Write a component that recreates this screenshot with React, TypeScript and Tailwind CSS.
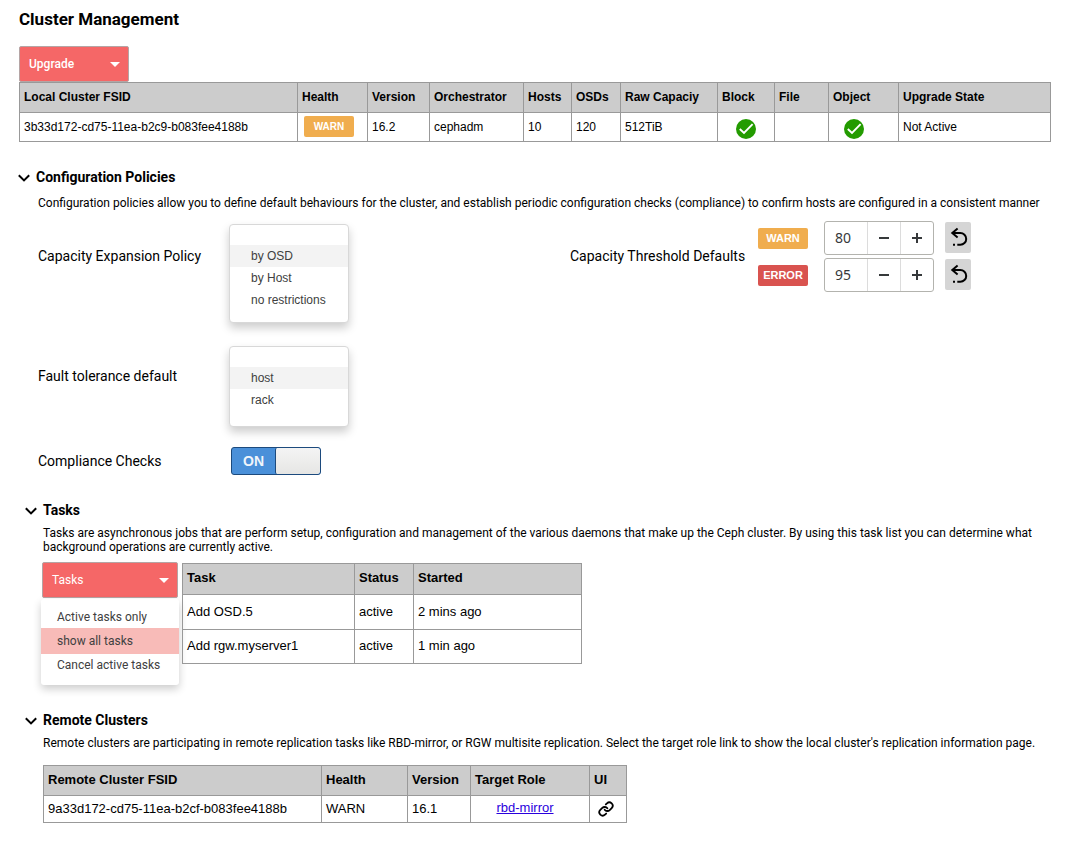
import { useState } from "react";
import type { ReactNode } from "react";

function Chevron() {
  return (
    <svg viewBox="0 0 12 10" className="h-[10px] w-3 shrink-0" fill="none" stroke="#000" strokeWidth="2" aria-hidden="true">
      <path d="M0.8 3.2 L6 8.4 L11.2 3.2" />
    </svg>
  );
}

function Caret() {
  return (
    <svg viewBox="0 0 10 5" className="h-[5px] w-[10px] shrink-0" fill="#fff" aria-hidden="true">
      <path d="M0 0 H10 L5 5 Z" />
    </svg>
  );
}

function CheckCircle() {
  return (
    <svg viewBox="0 0 20 20" className="h-5 w-5" role="img" aria-label="Enabled">
      <circle cx="10" cy="10" r="10" fill="#239b00" />
      <path d="M3.8 10 L8 14 L16.6 5.2" fill="none" stroke="#fff" strokeWidth="1.9" />
    </svg>
  );
}

function UndoIcon() {
  return (
    <svg viewBox="0 0 26 31" className="h-[31px] w-[26px]" fill="none" stroke="#000" strokeWidth="2" aria-hidden="true">
      <path d="M12.6 6.6 L7.3 11 L12.6 15.4" />
      <path d="M7.5 11 H15.3 A5.9 5.9 0 0 1 15.3 22.8 H12.3" />
      <path d="M8 22.8 H10" />
    </svg>
  );
}

function LinkIcon() {
  return (
    <svg viewBox="0 0 24 24" className="h-4 w-4" fill="none" stroke="#000" strokeWidth="2.7" strokeLinecap="round" strokeLinejoin="round" aria-hidden="true">
      <path d="M10 13a5 5 0 0 0 7.54.54l3-3a5 5 0 0 0-7.07-7.07l-1.72 1.71" />
      <path d="M14 11a5 5 0 0 0-7.54-.54l-3 3a5 5 0 0 0 7.07 7.07l1.71-1.71" />
    </svg>
  );
}

function Badge({ tone, size, children }: { tone: "warn" | "error"; size: string; children: ReactNode }) {
  const color = tone === "warn" ? "bg-[#f0ad4e]" : "bg-[#d9534f]";
  return (
    <span className={`${color} ${size} flex h-[21px] w-[50px] shrink-0 items-center justify-center rounded-[2px] font-['Liberation_Sans',sans-serif] font-bold text-white`}>
      {children}
    </span>
  );
}

function SectionHeading({ children }: { children: ReactNode }) {
  return (
    <h2 className="text-[14px] leading-5 font-bold">
      <button type="button" aria-expanded="true" className="flex items-center gap-[6px]">
        <Chevron />
        {children}
      </button>
    </h2>
  );
}

const th = "border border-[#999] px-1 pb-[2px] text-left align-middle font-bold";
const td = "border border-[#999] px-1 pb-px text-left align-middle";

function OptionList({ label, options, className }: { label: string; options: string[]; className: string }) {
  const [selected, setSelected] = useState(options[0]);
  return (
    <ul
      role="listbox"
      aria-label={label}
      className={`${className} w-[120px] rounded-[4px] border border-[#d8d8d8] bg-white pt-5 font-['Liberation_Sans',sans-serif] text-[12px] text-[#404040] shadow-[0_5px_10px_rgba(0,0,0,0.2)]`}
    >
      {options.map((option) => (
        <li key={option} role="option" aria-selected={option === selected}>
          <button
            type="button"
            onClick={() => setSelected(option)}
            className={`block h-[22px] w-full pl-[21px] text-left ${option === selected ? "bg-[#f3f3f3]" : ""}`}
          >
            {option}
          </button>
        </li>
      ))}
    </ul>
  );
}

function Stepper({ label, tone, initial }: { label: string; tone: "warn" | "error"; initial: number }) {
  const [value, setValue] = useState(initial);
  return (
    <div className="flex items-center">
      <Badge tone={tone} size="pt-px text-[11px]">{label}</Badge>
      <div className="ml-4 flex h-[34px] w-[110px] overflow-hidden rounded-[3px] border border-[#b3b3ae] bg-white text-[#36393b]">
        <input
          aria-label={`${label} threshold`}
          value={value}
          onChange={(e) => setValue(Number(e.target.value) || 0)}
          className="w-[42px] bg-transparent pb-[2px] pl-[10px] font-['Noto_Sans',sans-serif] text-[14px] outline-none"
        />
        <button type="button" aria-label={`Decrease ${label}`} onClick={() => setValue(value - 1)} className="flex flex-1 items-center justify-center border-l border-[#dcdcdc]">
          <svg viewBox="0 0 12 12" className="h-3 w-3" stroke="#36393b" strokeWidth="2"><path d="M1 6 H11" /></svg>
        </button>
        <button type="button" aria-label={`Increase ${label}`} onClick={() => setValue(value + 1)} className="flex flex-1 items-center justify-center border-l border-[#dcdcdc]">
          <svg viewBox="0 0 12 12" className="h-3 w-3" stroke="#36393b" strokeWidth="2"><path d="M1 6 H11 M6 1 V11" /></svg>
        </button>
      </div>
      <button type="button" aria-label={`Reset ${label}`} onClick={() => setValue(initial)} className="mt-px ml-[11px] self-start rounded-[2px] bg-[#d5d5d5]">
        <UndoIcon />
      </button>
    </div>
  );
}

function LocalClusterTable() {
  const columns = ["Local Cluster FSID", "Health", "Version", "Orchestrator", "Hosts", "OSDs", "Raw Capaciy", "Block", "File", "Object", "Upgrade State"];
  return (
    <table className="w-full table-fixed border-collapse font-['Liberation_Sans',sans-serif] text-[12px]">
      <colgroup>
        <col className="w-[278px]" />
        <col className="w-[70px]" />
        <col className="w-[62px]" />
        <col className="w-[94px]" />
        <col className="w-[48px]" />
        <col className="w-[49px]" />
        <col className="w-[97px]" />
        <col className="w-[57px]" />
        <col className="w-[54px]" />
        <col className="w-[70px]" />
        <col />
      </colgroup>
      <thead>
        <tr className="h-[30px] bg-[#ccc]">
          {columns.map((c) => (
            <th key={c} className={th}>{c}</th>
          ))}
        </tr>
      </thead>
      <tbody>
        <tr className="h-[29px]">
          <td className={td}>3b33d172-cd75-11ea-b2c9-b083fee4188b</td>
          <td className="border border-[#999] px-[6px] pb-px"><Badge tone="warn" size="text-[10px]">WARN</Badge></td>
          <td className={td}>16.2</td>
          <td className={td}>cephadm</td>
          <td className={td}>10</td>
          <td className={td}>120</td>
          <td className={td}>512TiB</td>
          <td className="border border-[#999] pt-1"><div className="flex justify-center"><CheckCircle /></div></td>
          <td className={td} />
          <td className="border border-[#999] pt-1 pr-5"><div className="flex justify-center"><CheckCircle /></div></td>
          <td className={td}>Not Active</td>
        </tr>
      </tbody>
    </table>
  );
}

function TasksTable() {
  const tasks = [
    ["Add OSD.5", "active", "2 mins ago"],
    ["Add rgw.myserver1", "active", "1 min ago"],
  ];
  return (
    <table className="mt-px w-[400px] table-fixed border-collapse font-['Liberation_Sans',sans-serif] text-[13px]">
      <colgroup>
        <col className="w-[172px]" />
        <col className="w-[59px]" />
        <col />
      </colgroup>
      <thead>
        <tr className="h-[31px] bg-[#ccc]">
          <th className={th}>Task</th>
          <th className={th}>Status</th>
          <th className={th}>Started</th>
        </tr>
      </thead>
      <tbody>
        {tasks.map((row) => (
          <tr key={row[0]} className="h-[34px] first:h-[35px]">
            {row.map((cell) => (
              <td key={cell} className={td}>{cell}</td>
            ))}
          </tr>
        ))}
      </tbody>
    </table>
  );
}

function RemoteTable() {
  return (
    <table className="w-[584px] table-fixed border-collapse font-['Liberation_Sans',sans-serif] text-[13px]">
      <colgroup>
        <col className="w-[278px]" />
        <col className="w-[86px]" />
        <col className="w-[63px]" />
        <col className="w-[119px]" />
        <col />
      </colgroup>
      <thead>
        <tr className="h-[30px] bg-[#ccc]">
          {["Remote Cluster FSID", "Health", "Version", "Target Role", "UI"].map((c) => (
            <th key={c} className={th}>{c}</th>
          ))}
        </tr>
      </thead>
      <tbody>
        <tr className="h-[27px]">
          <td className={td}>9a33d172-cd75-11ea-b2cf-b083fee4188b</td>
          <td className={td}>WARN</td>
          <td className={td}>16.1</td>
          <td className="border border-[#999] pr-[10px] pb-[2px] text-center">
            <a href="#rbd-mirror" className="text-[#2a00dd] underline">rbd-mirror</a>
          </td>
          <td className="border border-[#999] pb-px">
            <a href="#cluster-ui" aria-label="Open cluster UI" className="flex justify-center pr-1"><LinkIcon /></a>
          </td>
        </tr>
      </tbody>
    </table>
  );
}

const menuButton =
  "flex h-9 items-center justify-between rounded-[2px] border border-[#b5a5a5] bg-[#f56767] pr-2 pl-[9px] text-[12px] text-white";

export default function App() {
  const [compliance, setCompliance] = useState(true);
  const [filter, setFilter] = useState("show all tasks");

  return (
    <main className="min-h-screen bg-white pt-[7px] pr-[25px] pb-5 pl-[19px] font-[Roboto,sans-serif] text-black">
      <h1 className="text-[17px] leading-6 font-bold">Cluster Management</h1>

      <button type="button" className={`${menuButton} mt-[15px] w-[110px] font-medium`}>
        Upgrade
        <Caret />
      </button>
      <LocalClusterTable />

      <section className="mt-[25px]">
        <div className="-ml-px">
          <SectionHeading>Configuration Policies</SectionHeading>
        </div>
        <p className="mt-[9px] pl-[19px] text-[12px] leading-[14px]">
          Configuration policies allow you to define default behaviours for the cluster, and establish periodic configuration checks (compliance) to confirm hosts are configured in a consistent manner
        </p>

        <div className="mt-[11px] flex items-start pl-[19px] text-[14px]">
          <div className="grid w-[532px] grid-cols-[191px_1fr] items-start pt-[3px]">
            <span className="pt-[22px] leading-5">Capacity Expansion Policy</span>
            <OptionList label="Capacity Expansion Policy" options={["by OSD", "by Host", "no restrictions"]} className="pb-[11px]" />
            <span className="pt-[43px] leading-5">Fault tolerance default</span>
            <OptionList label="Fault tolerance default" options={["host", "rack"]} className="mt-[23px] pb-[15px]" />
            <label htmlFor="compliance" className="pt-6 leading-5">Compliance Checks</label>
            <button
              id="compliance"
              type="button"
              role="switch"
              aria-checked={compliance}
              onClick={() => setCompliance(!compliance)}
              className="mt-5 ml-[2px] flex h-7 w-[90px] overflow-hidden rounded-[3px] border border-[#1c4a7d] bg-[#4a90d9]"
            >
              <span className="flex h-full flex-1 items-center justify-center font-['Liberation_Sans',sans-serif] text-[14px] font-bold text-[#f0f5fb]">ON</span>
              <span className="h-full w-[45px] rounded-[2px] border-l border-[#1c4a7d] bg-linear-to-b from-[#f4f4f4] to-[#e6e6e4]" />
            </button>
          </div>
          <div className="flex items-center">
            <span className="w-[188px] pb-[2px] leading-5">Capacity Threshold Defaults</span>
            <div className="flex flex-col gap-[3px]">
              <Stepper label="WARN" tone="warn" initial={80} />
              <Stepper label="ERROR" tone="error" initial={95} />
            </div>
          </div>
        </div>
      </section>

      <section className="mt-[25px] pl-[6px]">
        <SectionHeading>Tasks</SectionHeading>
        <p className="mt-[6px] pl-[18px] text-[12px] leading-[14px]">
          Tasks are asynchronous jobs that are perform setup, configuration and management of the various daemons that make up the Ceph cluster. By using this task list you can determine what background operations are currently active.
        </p>
        <div className="mt-2 flex items-start gap-[3px] pl-4">
          <div className="w-[138px]">
            <button type="button" aria-expanded="true" className={`${menuButton} ml-px w-[136px]`}>
              Tasks
              <Caret />
            </button>
            <ul className="mt-px rounded-[3px] bg-white pt-[7px] pb-[9px] text-[12px] text-[#404040] shadow-[0_4px_8px_rgba(0,0,0,0.2)]">
              {["Active tasks only", "show all tasks", "Cancel active tasks"].map((item) => (
                <li key={item}>
                  <button
                    type="button"
                    onClick={() => setFilter(item)}
                    className={`block w-full pl-4 text-left ${item === filter ? "bg-[#f8bbb8] leading-[26px]" : "leading-[22px]"}`}
                  >
                    {item}
                  </button>
                </li>
              ))}
            </ul>
          </div>
          <TasksTable />
        </div>
      </section>

      <section className="mt-[25px] pl-[6px]">
        <SectionHeading>Remote Clusters</SectionHeading>
        <p className="mt-[6px] pl-[18px] text-[12px] leading-[14px]">
          Remote clusters are participating in remote replication tasks like RBD-mirror, or RGW multisite replication. Select the target role link to show the local cluster's replication information page.
        </p>
        <div className="mt-[15px] pl-[18px]">
          <RemoteTable />
        </div>
      </section>
    </main>
  );
}
